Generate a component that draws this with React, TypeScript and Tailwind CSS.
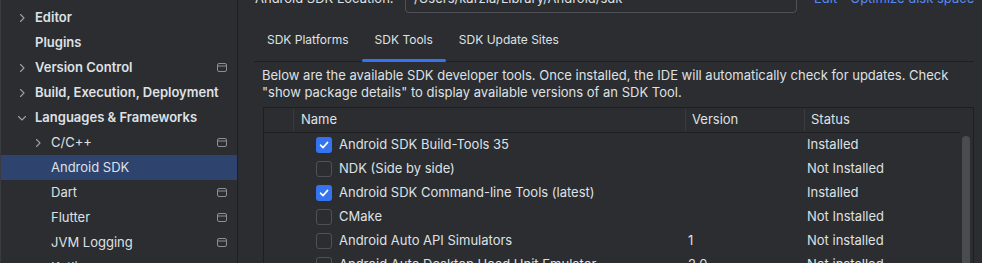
import React from 'react';

type NavItem = {
  label: string;
  level: 0 | 1;
  chevron?: 'right' | 'down';
  bold?: boolean;
  icon?: boolean;
  selected?: boolean;
};

const navItems: NavItem[] = [
  { label: 'Editor', level: 0, chevron: 'right', bold: true },
  { label: 'Plugins', level: 0, bold: true },
  { label: 'Version Control', level: 0, chevron: 'right', bold: true, icon: true },
  { label: 'Build, Execution, Deployment', level: 0, chevron: 'right', bold: true },
  { label: 'Languages & Frameworks', level: 0, chevron: 'down', bold: true },
  { label: 'C/C++', level: 1, chevron: 'right', icon: true },
  { label: 'Android SDK', level: 1, selected: true },
  { label: 'Dart', level: 1, icon: true },
  { label: 'Flutter', level: 1, icon: true },
  { label: 'JVM Logging', level: 1, icon: true },
  { label: 'Kotlin', level: 1 },
];

type Tool = { name: string; checked: boolean; version: string; status: string };

const tools: Tool[] = [
  { name: 'Android SDK Build-Tools 35', checked: true, version: '', status: 'Installed' },
  { name: 'NDK (Side by side)', checked: false, version: '', status: 'Not Installed' },
  { name: 'Android SDK Command-line Tools (latest)', checked: true, version: '', status: 'Installed' },
  { name: 'CMake', checked: false, version: '', status: 'Not Installed' },
  { name: 'Android Auto API Simulators', checked: false, version: '1', status: 'Not installed' },
  { name: 'Android Auto Desktop Head Unit Emulator', checked: false, version: '2.0', status: 'Not installed' },
];

function Chevron({ dir }: { dir: 'right' | 'down' }) {
  return (
    <svg width="12" height="12" viewBox="0 0 12 12" fill="none">
      {dir === 'right' ? (
        <path d="M4.5 2.5L8 6L4.5 9.5" stroke="#9da0a8" strokeWidth="1.1" strokeLinecap="round" strokeLinejoin="round" />
      ) : (
        <path d="M2.5 4.5L6 8L9.5 4.5" stroke="#9da0a8" strokeWidth="1.1" strokeLinecap="round" strokeLinejoin="round" />
      )}
    </svg>
  );
}

function WindowIcon() {
  return (
    <svg width="10" height="9" viewBox="0 0 10 9" fill="none">
      <rect x="0.5" y="0.5" width="9" height="8" rx="1.5" stroke="#8c8f96" />
      <path d="M0.5 3H9.5" stroke="#8c8f96" />
    </svg>
  );
}

function Checkbox({ checked }: { checked: boolean }) {
  if (checked) {
    return (
      <div className="w-[16px] h-[16px] rounded-[3px] bg-[#3574f0] flex items-center justify-center">
        <svg width="12" height="12" viewBox="0 0 12 12" fill="none">
          <path d="M2.5 6.2L5 8.6L9.6 3.4" stroke="#ffffff" strokeWidth="1.6" strokeLinecap="round" strokeLinejoin="round" />
        </svg>
      </div>
    );
  }
  return <div className="w-[16px] h-[16px] rounded-[3px] border border-[#4e5157]" />;
}

function Sidebar() {
  return (
    <div className="w-[238px] shrink-0 border-l border-l-[#393b40] border-r border-r-[#1e1f22] pt-[5px]">
      {navItems.map((item) => (
        <div
          key={item.label}
          className={`h-[25px] flex items-center pr-[10px] ${item.selected ? 'bg-[#2e436e]' : ''} ${item.level === 0 ? 'pl-[15px]' : 'pl-[31px]'}`}
        >
          <div className="w-[12px] h-[12px] flex items-center justify-center">
            {item.chevron && <Chevron dir={item.chevron} />}
          </div>
          <span className={`ml-[7px] flex-1 text-[13px] text-[#dfe1e5] whitespace-nowrap ${item.bold ? 'font-semibold' : ''}`}>
            {item.label}
          </span>
          {item.icon && <WindowIcon />}
        </div>
      ))}
    </div>
  );
}

function Tabs() {
  const tabs = ['SDK Platforms', 'SDK Tools', 'SDK Update Sites'];
  return (
    <div className="mt-[7px] h-[42px] flex border-b border-[#1e1f22]">
      {tabs.map((t) => (
        <div key={t} className="relative h-full px-[13px] flex items-center pb-[2px] text-[12px] text-[#dfe1e5]">
          {t}
          {t === 'SDK Tools' && <div className="absolute left-0 right-0 bottom-[-1px] h-[3px] rounded-full bg-[#3574f0]" />}
        </div>
      ))}
    </div>
  );
}

function ToolsTable() {
  return (
    <div className="ml-[9px] mt-[6px] flex border border-[#1e1f22] h-[200px]">
      <div className="flex-1">
        <div className="h-[25px] flex items-center border-b border-[#1e1f22] text-[13px] text-[#dfe1e5]">
          <div className="w-[30px] h-[22px] border-r border-[#393b40]" />
          <div className="w-[392px] h-[22px] flex items-center pl-[7px] border-r border-[#393b40]">Name</div>
          <div className="w-[119px] h-[22px] flex items-center pl-[6px] border-r border-[#393b40]">Version</div>
          <div className="flex-1 pl-[6px]">Status</div>
        </div>
        {tools.map((tool) => (
          <div key={tool.name} className="h-[24px] flex items-center text-[13px] text-[#dfe1e5] whitespace-nowrap">
            <div className="w-[30px]" />
            <div className="w-[392px] flex items-center pl-[22px]">
              <Checkbox checked={tool.checked} />
              <span className="ml-[7px]">{tool.name}</span>
            </div>
            <div className="w-[119px] pl-[2px]">{tool.version}</div>
            <div className="flex-1 pl-[2px]">{tool.status}</div>
          </div>
        ))}
      </div>
      <div className="w-[13px] pt-[28px] pl-[2px]">
        <div className="w-[8px] h-[200px] rounded-full bg-[#4a4c50]" />
      </div>
    </div>
  );
}

export default function App() {
  return (
    <div
      className="w-[982px] h-[263px] overflow-hidden bg-[#2b2d30] flex"
      style={{ fontFamily: 'Inter, "Noto Sans", sans-serif' }}
    >
      <Sidebar />
      <main className="flex-1 pl-[16px] pr-[13px]">
        <div className="-mt-[15px] h-[28px] flex items-center text-[13px] whitespace-nowrap">
          <span className="w-[151px] pl-[1px] text-[#dfe1e5]">Android SDK Location:</span>
          <div className="w-[392px] h-[28px] rounded-[4px] border border-[#4e5157] flex items-center pl-[8px] text-[#dfe1e5]">
            /Users/karzia/Library/Android/sdk
          </div>
          <a className="ml-[17px] text-[#548af7]">Edit</a>
          <a className="ml-[13px] text-[#548af7]">Optimize disk space</a>
        </div>
        <Tabs />
        <p className="mt-[5px] pl-[8px] text-[13px] leading-[17px] text-[#dfe1e5]">
          Below are the available SDK developer tools. Once installed, the IDE will automatically check for updates. Check
          <br />
          "show package details" to display available versions of an SDK Tool.
        </p>
        <ToolsTable />
      </main>
    </div>
  );
}
